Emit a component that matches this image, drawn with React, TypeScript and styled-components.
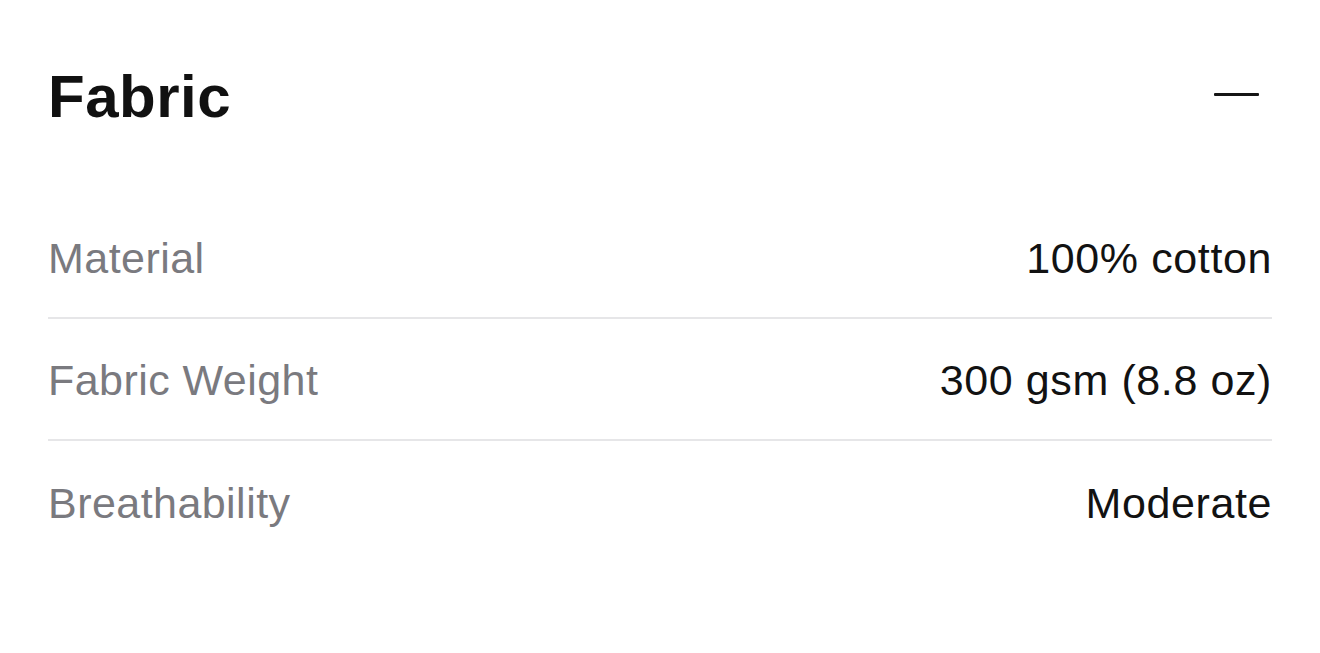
import React from 'react'
import styled, { createGlobalStyle } from 'styled-components'

const GlobalStyle = createGlobalStyle`
  html, body {
    margin: 0;
    padding: 0;
    background: #ffffff;
  }
  body {
    font-family: 'Liberation Sans', Arial, Helvetica, sans-serif;
    -webkit-font-smoothing: antialiased;
  }
`

const Section = styled.section`
  padding: 36px 48px;
`

const Header = styled.div`
  display: flex;
  align-items: center;
  justify-content: space-between;
  height: 122px;
`

const Title = styled.h2`
  margin: 0;
  font-size: 60px;
  line-height: 1;
  font-weight: 700;
  color: #111111;
  letter-spacing: 0.5px;
`

const ToggleButton = styled.button`
  display: flex;
  align-items: center;
  justify-content: center;
  width: 72px;
  height: 72px;
  padding: 0;
  border: 0;
  background: transparent;
  cursor: pointer;
  margin-top: -6px;
`

const MinusBar = styled.span`
  display: block;
  width: 45px;
  height: 3px;
  border-radius: 1px;
  background: #151515;
`

const SpecList = styled.dl`
  margin: 39px 0 0;
`

const SpecRow = styled.div<{ $last?: boolean }>`
  display: flex;
  align-items: center;
  justify-content: space-between;
  box-sizing: border-box;
  height: 122px;
  padding-top: 2px;
  border-bottom: ${(p) => (p.$last ? 'none' : '2px solid #e6e6e8')};
`

const Label = styled.dt`
  font-size: 43px;
  line-height: 1;
  letter-spacing: 0.45px;
  color: #7a7a7f;
`

const Value = styled.dd`
  margin: 0;
  font-size: 43px;
  line-height: 1;
  letter-spacing: 0.6px;
  color: #121212;
  text-align: right;
`

const specs = [
  { label: 'Material', value: '100% cotton' },
  { label: 'Fabric Weight', value: '300 gsm (8.8 oz)' },
  { label: 'Breathability', value: 'Moderate' },
]

const App = () => {
  return (
    <>
      <GlobalStyle />
      <Section>
        <Header>
          <Title>Fabric</Title>
          <ToggleButton aria-label="Collapse">
            <MinusBar />
          </ToggleButton>
        </Header>
        <SpecList>
          {specs.map((s, i) => (
            <SpecRow key={s.label} $last={i === specs.length - 1}>
              <Label>{s.label}</Label>
              <Value>{s.value}</Value>
            </SpecRow>
          ))}
        </SpecList>
      </Section>
    </>
  )
}

export default App
